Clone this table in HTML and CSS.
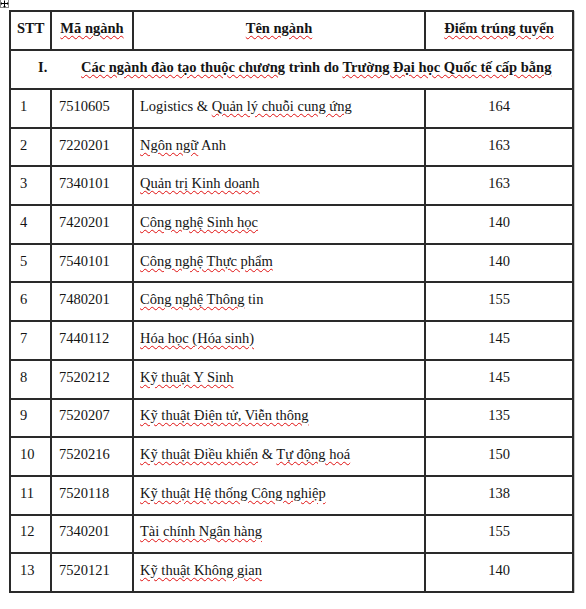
FILE: index.html
```html
<!DOCTYPE html>
<html lang="vi">
<head>
<meta charset="utf-8">
<title>Điểm trúng tuyển</title>
<link rel="stylesheet" href="styles.css">
</head>
<body>
<div class="page">
  <svg class="handle" width="9" height="9" viewBox="0 0 9 9" aria-hidden="true">
    <rect x="0.5" y="-0.5" width="8" height="8" fill="#fff" stroke="#888"/>
    <path d="M4.5 0.5v6M1.5 3.5h6" stroke="#000" stroke-width="1"/>
    <path d="M4.5 7.5l-1.5-1.5h3zM0.5 3.5l1.5-1.5v3zM8.5 3.5l-1.5-1.5v3z" fill="#000"/>
  </svg>
  <table class="tbl">
    <colgroup>
      <col class="c1"><col class="c2"><col class="c3"><col class="c4">
    </colgroup>
    <thead>
      <tr class="head">
        <th>STT</th>
        <th><span class="sp">Mã ngành</span></th>
        <th><span class="sp">Tên ngành</span></th>
        <th><span class="sp">Điểm trúng tuyển</span></th>
      </tr>
    </thead>
    <tbody>
      <tr class="section">
        <td colspan="4"><span class="num">I.</span><span class="sp">Các ngành đào tạo thuộc chương</span> trình do <span class="sp">Trường Đại học Quốc tế cấp bằng</span></td>
      </tr>
      <tr><td class="stt">1</td><td class="code">7510605</td><td class="name">Logistics &amp; <span class="sp">Quản lý chuỗi cung ứng</span></td><td class="score">164</td></tr>
      <tr><td class="stt">2</td><td class="code">7220201</td><td class="name"><span class="sp">Ngôn ngữ</span> Anh</td><td class="score">163</td></tr>
      <tr><td class="stt">3</td><td class="code">7340101</td><td class="name"><span class="sp">Quản trị Kinh doanh</span></td><td class="score">163</td></tr>
      <tr><td class="stt">4</td><td class="code">7420201</td><td class="name"><span class="sp">Công nghệ Sinh học</span></td><td class="score">140</td></tr>
      <tr><td class="stt">5</td><td class="code">7540101</td><td class="name"><span class="sp">Công nghệ Thực phẩm</span></td><td class="score">140</td></tr>
      <tr><td class="stt">6</td><td class="code">7480201</td><td class="name"><span class="sp">Công nghệ Thông</span> tin</td><td class="score">155</td></tr>
      <tr><td class="stt">7</td><td class="code">7440112</td><td class="name"><span class="sp">Hóa học (Hóa sinh)</span></td><td class="score">145</td></tr>
      <tr><td class="stt">8</td><td class="code">7520212</td><td class="name"><span class="sp">Kỹ thuật Y Sinh</span></td><td class="score">145</td></tr>
      <tr><td class="stt">9</td><td class="code">7520207</td><td class="name"><span class="sp">Kỹ thuật Điện tử, Viễn thông</span></td><td class="score">135</td></tr>
      <tr><td class="stt">10</td><td class="code">7520216</td><td class="name"><span class="sp">Kỹ thuật Điều khiển</span> &amp; <span class="sp">Tự động hoá</span></td><td class="score">150</td></tr>
      <tr><td class="stt">11</td><td class="code">7520118</td><td class="name"><span class="sp">Kỹ thuật Hệ thống Công nghiệp</span></td><td class="score">138</td></tr>
      <tr><td class="stt">12</td><td class="code">7340201</td><td class="name"><span class="sp">Tài chính Ngân hàng</span></td><td class="score">155</td></tr>
      <tr><td class="stt">13</td><td class="code">7520121</td><td class="name"><span class="sp">Kỹ thuật Không gian</span></td><td class="score">140</td></tr>
    </tbody>
  </table>
</div>
</body>
</html>
```

FILE: styles.css
```css
html, body {
  margin: 0;
  padding: 0;
  background: #fff;
}
body {
  font-family: "Liberation Serif", "Times New Roman", serif;
  font-size: 14.5px;
  color: #141414;
}
.page {
  position: relative;
  padding: 10px 0 0 9px;
}
.handle {
  position: absolute;
  left: 0;
  top: 0;
}
.tbl {
  border-collapse: collapse;
  table-layout: fixed;
  width: 563px;
  box-shadow: 1px 1px 0 #c8c8c8;
}
.c1 { width: 41px; }
.c2 { width: 82px; }
.c3 { width: 292px; }
.c4 { width: 148px; }
.tbl th, .tbl td {
  border: 2px solid #2a2a2a;
  padding: 0 6px 5px 6px;
  height: 31.7px;
  line-height: 16px;
  vertical-align: middle;
  white-space: nowrap;
}
.tbl th {
  font-weight: bold;
  text-align: center;
}
.head th { height: 32px; }
.section td {
  font-weight: bold;
  height: 32px;
  padding-left: 27px;
}
.section .num {
  display: inline-block;
  width: 43px;
}
.tbl td.stt { padding-left: 9px; }
.tbl td.code { padding-left: 7px; }
.tbl td.score { text-align: center; }
.sp {
  text-decoration: underline wavy #e01010;
  text-decoration-thickness: 1px;
  text-underline-offset: 2px;
}
```
